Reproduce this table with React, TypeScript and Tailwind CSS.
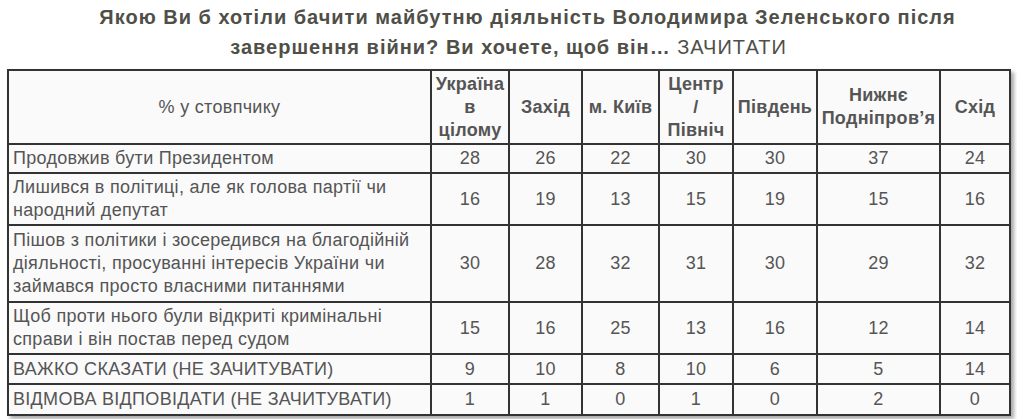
import React from "react";

type Row = {
  label: string;
  values: number[];
  height: string;
};

const columns = [
  { key: "ua", label: ["Україна", "в", "цілому"], width: "w-[78px]" },
  { key: "west", label: ["Захід"], width: "w-[73px]" },
  { key: "kyiv", label: ["м. Київ"], width: "w-[77px]" },
  { key: "center", label: ["Центр", "/", "Північ"], width: "w-[74px]" },
  { key: "south", label: ["Південь"], width: "w-[84px]" },
  { key: "dnipro", label: ["Нижнє", "Подніпров’я"], width: "w-[123px]" },
  { key: "east", label: ["Схід"], width: "w-[70px]" },
];

const rows: Row[] = [
  { label: "Продовжив бути Президентом", values: [28, 26, 22, 30, 30, 37, 24], height: "h-[29px]" },
  {
    label: "Лишився в політиці, але як голова партії чи народний депутат",
    values: [16, 19, 13, 15, 19, 15, 16],
    height: "h-[52px]",
  },
  {
    label:
      "Пішов з політики і зосередився на благодійній діяльності, просуванні інтересів України чи займався просто власними питаннями",
    values: [30, 28, 32, 31, 30, 29, 32],
    height: "h-[77px]",
  },
  {
    label: "Щоб проти нього були відкриті кримінальні справи і він постав перед судом",
    values: [15, 16, 25, 13, 16, 12, 14],
    height: "h-[51px]",
  },
  { label: "ВАЖКО СКАЗАТИ (НЕ ЗАЧИТУВАТИ)", values: [9, 10, 8, 10, 6, 5, 14], height: "h-[30px]" },
  { label: "ВІДМОВА ВІДПОВІДАТИ (НЕ ЗАЧИТУВАТИ)", values: [1, 1, 0, 1, 0, 2, 0], height: "h-[31px]" },
];

export default function App() {
  return (
    <main className="w-[1017px] h-[419px] bg-white text-[#555] font-['Liberation_Sans',Arial,sans-serif] overflow-hidden">
      <h1 className="pt-[2px] text-center text-[20px] leading-[30px] tracking-[1px] font-bold text-[#4f4f48]">
        <span className="block pl-[38px]">
          Якою Ви б хотіли бачити майбутню діяльність Володимира Зеленського після
        </span>
        <span className="block">
          завершення війни? Ви хочете, щоб він…{" "}
          <span className="font-normal">ЗАЧИТАТИ</span>
        </span>
      </h1>

      {/* table */}
      <table className="ml-[7px] mt-[7px] w-[1002px] table-fixed border-collapse bg-[#fafafa] text-[18px] leading-[23px] tracking-[0.3px] shadow-[3px_3px_4px_rgba(0,0,0,0.35)]">
        <colgroup>
          <col className="w-[423px]" />
          {columns.map((c) => (
            <col key={c.key} className={c.width} />
          ))}
        </colgroup>
        <thead>
          <tr className="h-[74px]">
            <th className="border-2 border-[#333] font-normal text-center align-middle">
              % у стовпчику
            </th>
            {columns.map((c) => (
              <th
                key={c.key}
                className="border-2 border-[#333] font-bold text-center align-middle leading-[23px] px-0"
              >
                {c.label.map((l, i) => (
                  <div key={i}>{l}</div>
                ))}
              </th>
            ))}
          </tr>
        </thead>
        <tbody>
          {rows.map((r) => (
            <tr key={r.label} className={r.height}>
              <td className="border-2 border-[#333] pl-[4px] pr-[2px] py-[2px] align-middle">
                {r.label}
              </td>
              {r.values.map((v, i) => (
                <td
                  key={i}
                  className="border-2 border-[#333] py-[2px] text-center align-middle"
                >
                  {v}
                </td>
              ))}
            </tr>
          ))}
        </tbody>
      </table>
    </main>
  );
}
